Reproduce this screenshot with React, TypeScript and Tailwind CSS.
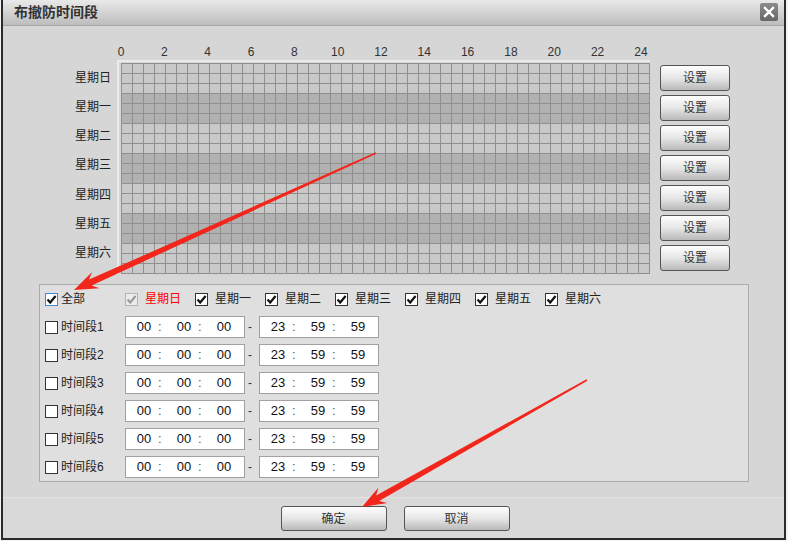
import React from "react";

const hours = [0, 2, 4, 6, 8, 10, 12, 14, 16, 18, 20, 22, 24];
const days = ["星期日", "星期一", "星期二", "星期三", "星期四", "星期五", "星期六"];

function arrowPoints(
  tx: number,
  ty: number,
  hx: number,
  hy: number,
  tailW: number,
  shaftW: number,
  headW: number,
  headL: number
) {
  const dx = hx - tx;
  const dy = hy - ty;
  const len = Math.hypot(dx, dy);
  const ux = dx / len;
  const uy = dy / len;
  const nx = -uy;
  const ny = ux;
  const bx = hx - ux * headL;
  const by = hy - uy * headL;
  const jx = hx - ux * headL * 0.75;
  const jy = hy - uy * headL * 0.75;
  const pts: [number, number][] = [
    [tx + nx * tailW, ty + ny * tailW],
    [jx + nx * shaftW, jy + ny * shaftW],
    [bx + nx * headW, by + ny * headW],
    [hx, hy],
    [bx - nx * headW, by - ny * headW],
    [jx - nx * shaftW, jy - ny * shaftW],
    [tx - nx * tailW, ty - ny * tailW],
  ];
  return pts.map((p) => `${p[0].toFixed(1)},${p[1].toFixed(1)}`).join(" ");
}

function Check({ variant }: { variant: "on" | "off" | "focus" | "disabled" }) {
  const border =
    variant === "focus"
      ? "border-[#3b8ad6]"
      : variant === "disabled"
      ? "border-[#b4b4b4]"
      : "border-[#333333]";
  const bg = variant === "disabled" ? "bg-[#ececec]" : "bg-white";
  const stroke = variant === "disabled" ? "#9c9c9c" : "#111111";
  return (
    <div className={`w-[13px] h-[13px] border ${border} ${bg} flex items-center justify-center shrink-0`}>
      {variant !== "off" && (
        <svg width="11" height="11" viewBox="0 0 11 11">
          <polyline points="1.5,5.5 4.2,8.5 9.6,2" fill="none" stroke={stroke} strokeWidth="2.2" />
        </svg>
      )}
    </div>
  );
}

function Btn({ label, w, h }: { label: string; w: string; h: string }) {
  return (
    <div
      className={`${w} ${h} rounded-[3px] border border-[#555555] bg-gradient-to-b from-[#fefefe] via-[#e6e6e6] to-[#b9b9b9] flex items-center justify-center text-[12px] text-[#333333]`}
    >
      {label}
    </div>
  );
}

function TimeBox({ a, b, c }: { a: string; b: string; c: string }) {
  return (
    <div className="w-[120px] h-[22px] bg-white border border-[#a0a0a0] flex items-center pl-[5px] text-[13px] text-[#111111]">
      <span className="w-[26px] text-center">{a}</span>
      <span className="w-[14px] pl-[1px] text-[#555555]">:</span>
      <span className="w-[26px] text-center">{b}</span>
      <span className="w-[14px] pl-[1px] text-[#555555]">:</span>
      <span className="w-[26px] text-center">{c}</span>
    </div>
  );
}

export default function App() {
  const cells = Array.from({ length: 21 * 48 }, (_, i) => {
    const row = Math.floor(i / 48);
    const dark = Math.floor(row / 3) % 2 === 1;
    return <div key={i} className={dark ? "bg-[#b1b1b1]" : "bg-[#c9c9c9]"} />;
  });

  return (
    <div className="relative w-[788px] h-[541px] bg-[#f4f4f4] overflow-hidden font-['Liberation_Sans','Noto_Sans_CJK_SC',sans-serif] text-[#222222]">
      <div className="ml-px w-[785px] h-[540px] border-l-2 border-r-2 border-b-2 border-[#2a2a2a] flex flex-col bg-[#d6d6d6]">
        {/* Title bar */}
        <div className="h-[26px] shrink-0 flex items-start justify-between bg-gradient-to-b from-[#e9e9e9] to-[#bdbdbd] border-b border-[#a9a9a9] pl-[11px] pr-[6px]">
          <div className="pt-[4px] text-[14px] leading-[16px] font-bold text-[#333333]">布撤防时间段</div>
          <div className="mt-[3px] w-[18px] h-[18px] rounded-[2px] bg-gradient-to-b from-[#8c8c8c] to-[#666666] flex items-center justify-center">
            <svg width="12" height="12" viewBox="0 0 12 12">
              <path d="M2 2 L10 10 M10 2 L2 10" stroke="#ffffff" strokeWidth="2.4" strokeLinecap="square" />
            </svg>
          </div>
        </div>

        {/* Body */}
        <div className="flex-1 flex flex-col">
          {/* hour labels */}
          <div className="flex ml-[96.33px] mt-[19px] h-[14px]">
            {hours.map((h) => (
              <div key={h} className="w-[43.33px] text-center text-[12px] leading-[14px] text-[#333333]">
                {h}
              </div>
            ))}
          </div>

          {/* grid row */}
          <div className="flex mt-[1px]">
            <div className="w-[108px] pt-[3.4px] flex flex-col">
              {days.map((d) => (
                <div key={d} className="h-[29.17px] flex items-center justify-end text-[12px] text-[#222222]">
                  {d}
                </div>
              ))}
            </div>
            <div className="ml-[6px] border-l-2 border-t-2 border-[#ebebeb] pl-[2px] pt-[1px]">
              <div className="grid grid-cols-[repeat(48,10px)] grid-rows-[repeat(21,9px)] gap-px p-px bg-[#8f8f8f] w-[529px] h-[211px]">
                {cells}
              </div>
            </div>
            <div className="ml-[10px] pt-[5px] flex flex-col gap-[4px]">
              {days.map((d) => (
                <Btn key={d} label="设置" w="w-[70px]" h="h-[26px]" />
              ))}
            </div>
          </div>

          {/* lower panel */}
          <div className="ml-[36px] mt-[10px] w-[710px] h-[198px] border border-[#ababab] bg-[#dfdfdf] pl-[5px] flex flex-col text-[12px]">
            <div className="h-[28px] flex items-center">
              <div className="w-[80px] flex items-center gap-[3px]">
                <Check variant="focus" />
                <span>全部</span>
              </div>
              {days.map((d, i) => (
                <div key={d} className="w-[70px] flex items-center gap-[7px]">
                  <Check variant={i === 0 ? "disabled" : "on"} />
                  <span className={i === 0 ? "text-[#ff0000]" : "text-[#222222]"}>{d}</span>
                </div>
              ))}
            </div>
            {[1, 2, 3, 4, 5, 6].map((n) => (
              <div key={n} className="h-[28px] flex items-center">
                <div className="w-[80px] flex items-center gap-[3px]">
                  <Check variant="off" />
                  <span>时间段{n}</span>
                </div>
                <TimeBox a="00" b="00" c="00" />
                <div className="w-[14px] pl-[3px] text-[12px] text-[#333333]">-</div>
                <TimeBox a="23" b="59" c="59" />
              </div>
            ))}
          </div>
        </div>

        {/* Footer */}
        <div className="h-[41px] shrink-0 border-t border-[#e3e3e3] bg-[#d9d9d9] pt-[8px] pl-[3px] flex justify-center gap-[17px]">
          <Btn label="确定" w="w-[106px]" h="h-[25px]" />
          <Btn label="取消" w="w-[106px]" h="h-[25px]" />
        </div>
      </div>

      {/* annotation arrows */}
      <svg className="absolute left-0 top-0 pointer-events-none" width="788" height="541" viewBox="0 0 788 541">
        <polygon points={arrowPoints(376, 153, 74, 290, 0.8, 3.2, 9, 24)} fill="#f2261b" />
        <polygon points={arrowPoints(587, 380, 362, 507, 0.8, 3.2, 9, 24)} fill="#f2261b" />
      </svg>
    </div>
  );
}
